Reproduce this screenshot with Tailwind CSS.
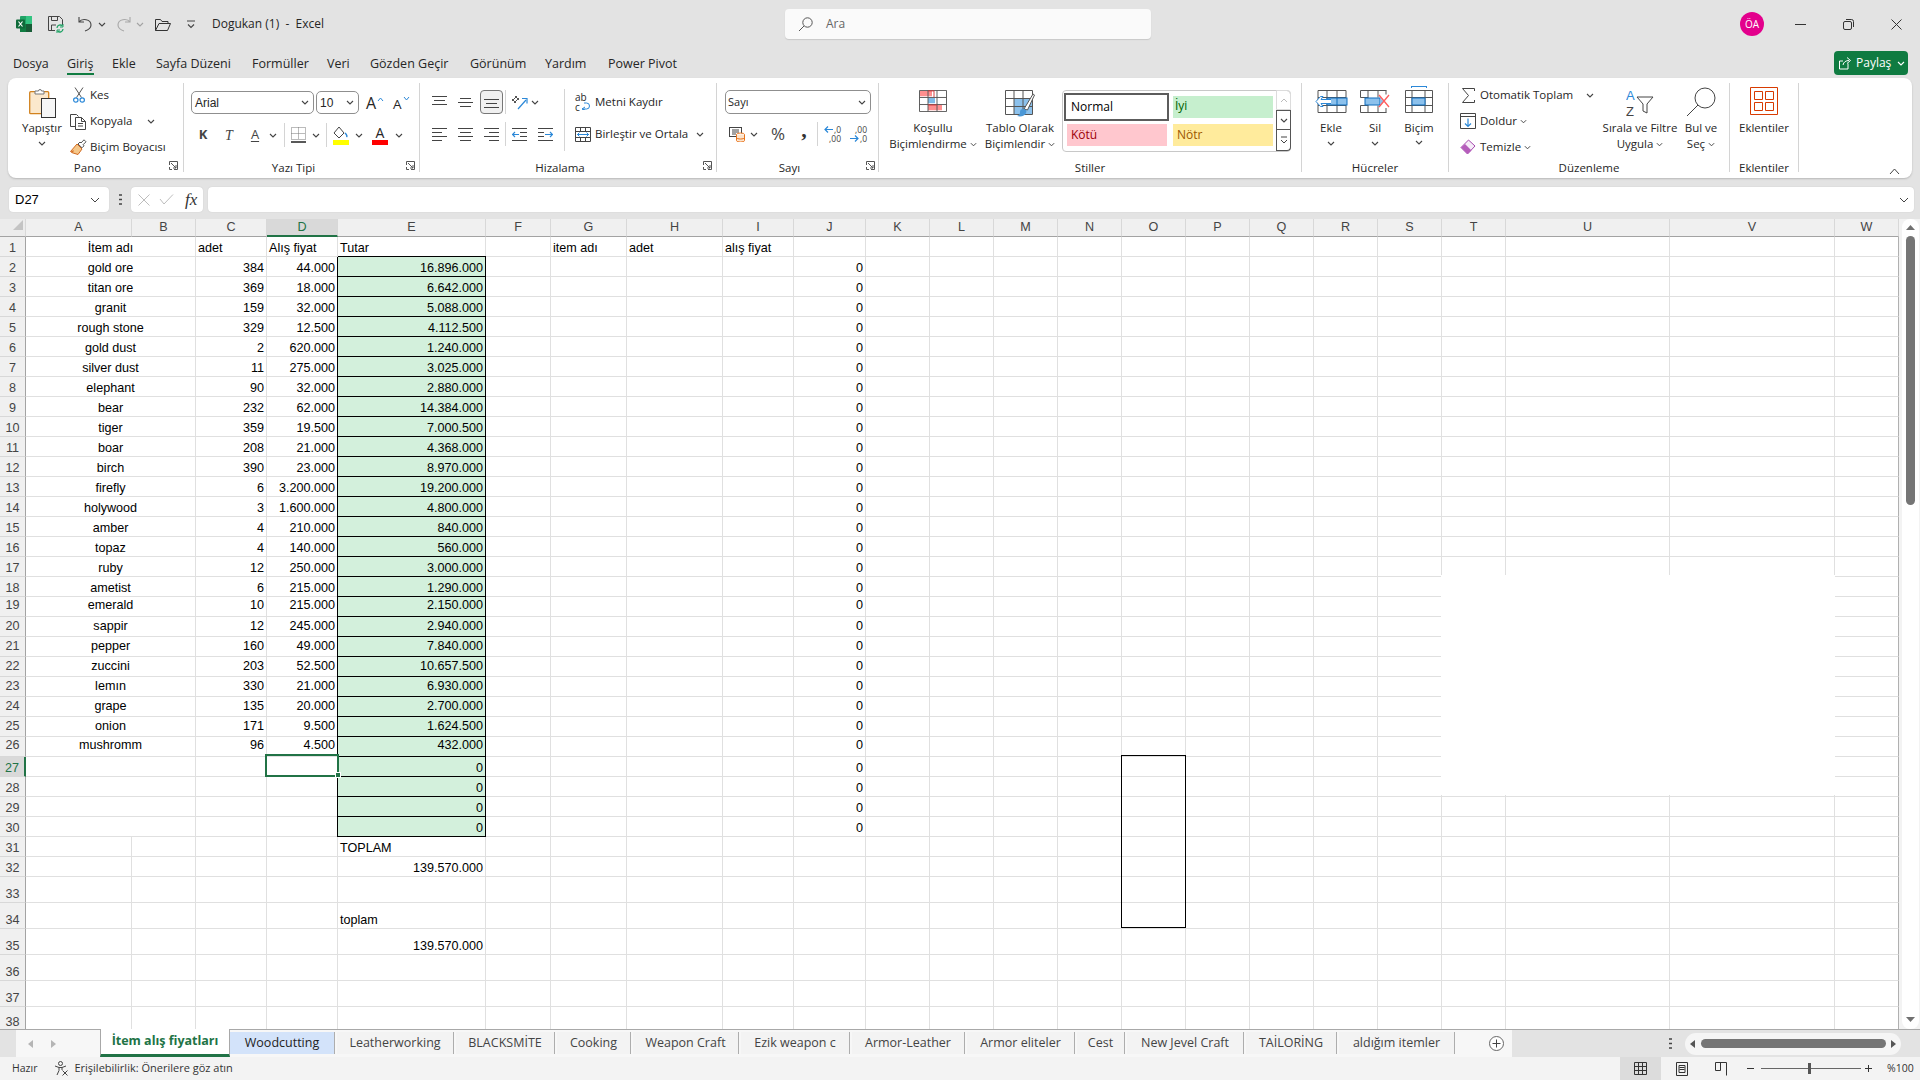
<!DOCTYPE html>
<html lang="tr">
<head>
<meta charset="utf-8">
<title>Dogukan (1) - Excel</title>
<script src="https://cdn.jsdelivr.net/npm/@tailwindcss/browser@4"></script>
</head>
<body class="w-[1920px] h-[1080px] overflow-hidden bg-[#e3e3e3] text-[#262626] flex flex-col font-['Open_Sans',sans-serif] text-[11.5px]">
<svg class="hidden"><symbol id="c" viewBox="0 0 8 5"><path d="M1 1l3 3 3-3" fill="none" stroke="#444" stroke-width="1.1"/></symbol></svg>

<!-- title bar -->
<div class="flex items-center h-[48px] shrink-0">
  <div class="flex items-center w-[785px] shrink-0">
    <svg class="ml-[16px]" width="16" height="16" viewBox="0 0 16 16"><rect x="4" width="12" height="16" rx="1" fill="#21a366"/><rect x="10" width="6" height="8" fill="#33c481"/><rect x="4" y="8" width="6" height="8" fill="#107c41"/><rect x="10" y="8" width="6" height="8" fill="#185c37"/><rect y="3.5" width="9" height="9" rx="1" fill="#0f6b3a"/><path d="M2.5 5.5l4 5M6.5 5.5l-4 5" stroke="#fff" stroke-width="1.2"/></svg>
    <svg class="ml-[16px]" width="16" height="17" viewBox="0 0 16 17"><path d="M.5.5h11l3 3V9M.5.5v14H7M3.5.5v4h6v-4M3.5 14V9H8" fill="none" stroke="#444"/><path d="M9 12a3.2 3.2 0 0 1 5.5-2M15 13a3.2 3.2 0 0 1-5.5 2" fill="none" stroke="#21a366" stroke-width="1.3"/><path d="M15 8v3h-3M9 17v-3h3" fill="none" stroke="#21a366"/></svg>
    <svg class="ml-[14px]" width="14" height="16" viewBox="0 0 14 16"><path d="M1 1v5h5M1 6c3-4 12-3 12 3 0 3-3 5-6 6" fill="none" stroke="#444" stroke-width="1.1"/></svg>
    <svg class="ml-[6px]" width="8" height="5"><use href="#c"/></svg>
    <svg class="ml-[11px]" width="14" height="16" viewBox="0 0 14 16"><path d="M13 1v5H8M13 6C10 2 1 3 1 9c0 3 3 5 6 6" fill="none" stroke="#a8a8a8" stroke-width="1.1"/></svg>
    <svg class="ml-[5px] opacity-40" width="8" height="5"><use href="#c"/></svg>
    <svg class="ml-[11px]" width="16" height="13" viewBox="0 0 16 13"><path d="M.5 12.5V1.5h5l1.5 2h6v2M.5 12.5h12l3-7H4l-3.5 7z" fill="none" stroke="#333"/></svg>
    <svg class="ml-[15px]" width="10" height="9" viewBox="0 0 10 9"><path d="M1 1h8M2 4.5l3 3 3-3" fill="none" stroke="#444" stroke-width="1.1"/></svg>
    <span class="ml-[16px] text-[12px] whitespace-pre">Dogukan (1)  -  Excel</span>
  </div>
  <div class="w-[366px] h-[30px] shrink-0 rounded-[4px] bg-[#fafafa] shadow-[0_1px_1px_#c8c8c8] flex items-center pl-[13px] text-[#666] text-[12px]">
    <svg width="15" height="15" viewBox="0 0 15 15"><circle cx="9.5" cy="5.5" r="4.7" fill="none" stroke="#555"/><path d="M6 9l-5 5" stroke="#555"/></svg>
    <span class="ml-[13px]">Ara</span>
  </div>
  <div class="flex-1 flex items-center justify-end">
    <div class="w-[24px] h-[24px] mr-[12px] rounded-full bg-[#e3008c] text-white text-[10px] flex items-center justify-center">ÖA</div>
    <div class="w-[48px] flex justify-center"><svg width="11" height="11"><path d="M0 5.5h11" stroke="#333"/></svg></div>
    <div class="w-[48px] flex justify-center"><svg width="11" height="11" viewBox="0 0 11 11"><rect x=".5" y="2.5" width="8" height="8" rx="1.5" fill="none" stroke="#333"/><path d="M3 .5h5.5a2 2 0 0 1 2 2V8" fill="none" stroke="#333"/></svg></div>
    <div class="w-[48px] flex justify-center"><svg width="11" height="11"><path d="M.5.5l10 10M10.5.5l-10 10" stroke="#333"/></svg></div>
  </div>
</div>

<!-- menu -->
<div class="flex items-center h-[30px] shrink-0 pl-[13px] text-[12.5px] [&>span]:pt-[2px]">
  <span class="w-[54px]">Dosya</span>
  <span class="w-[45px] relative font-medium">Giriş<span class="absolute left-0 top-[20px] w-[27px] h-[2px] bg-[#107c41]"></span></span>
  <span class="w-[44px]">Ekle</span>
  <span class="w-[96px]">Sayfa Düzeni</span>
  <span class="w-[75px]">Formüller</span>
  <span class="w-[43px]">Veri</span>
  <span class="w-[100px]">Gözden Geçir</span>
  <span class="w-[75px]">Görünüm</span>
  <span class="w-[63px]">Yardım</span>
  <span>Power Pivot</span>
  <div class="ml-auto mr-[12px] w-[74px] h-[24px] rounded-[4px] bg-[#0f7b41] text-white flex items-center pl-[5px] text-[12px]">
    <svg width="13" height="13" viewBox="0 0 13 13"><path d="M9 6.5v5.5H.5V4H4M4 8c.5-3 3-4.5 6-4.5M8 .5l3.5 3-3.5 3" fill="none" stroke="#fff"/></svg>
    <span class="ml-[4px]">Paylaş</span>
    <svg class="ml-[6px]" width="8" height="5" viewBox="0 0 8 5"><path d="M1 1l3 3 3-3" fill="none" stroke="#fff" stroke-width="1.1"/></svg>
  </div>
</div>

<!-- ribbon -->
<div class="mx-[8px] w-[1904px] h-[100px] shrink-0 rounded-[8px] bg-white shadow-[0_1px_2px_#b8b8b8] flex pt-[5px]">

  <!-- Pano -->
  <div class="w-[176px] h-[89px] border-r border-[#d4d4d4] flex flex-col">
    <div class="h-[75px] shrink-0 flex">
      <div class="ml-[6px] w-[56px] flex flex-col items-center pt-[5px]">
        <svg width="27" height="30" viewBox="0 0 27 30"><rect x=".7" y="3.7" width="19" height="22" rx="1" fill="#fbe8cc" stroke="#d2821e" stroke-width="1.3"/><path d="M6 6V3h3.5a1.5 1.5 0 0 1 3 0H15v3z" fill="#fff" stroke="#777"/><rect x="12.5" y="10.5" width="14" height="19" fill="#f6f6f6" stroke="#333"/></svg>
        <span class="mt-[2px] leading-[16px]">Yapıştır</span>
        <svg class="mt-[5px]" width="8" height="5"><use href="#c"/></svg>
      </div>
      <div class="flex flex-col -mt-[1px] [&>div]:shrink-0">
        <div class="h-[26px] flex items-center"><div class="w-[20px] flex justify-center pr-[3px]"><svg width="12" height="16" viewBox="0 0 12 16"><path d="M2 .5l6.5 10M10 .5L3.5 10.5" stroke="#555"/><circle cx="2.8" cy="13" r="2.2" fill="none" stroke="#2b88d8" stroke-width="1.2"/><circle cx="9.2" cy="13" r="2.2" fill="none" stroke="#2b88d8" stroke-width="1.2"/></svg></div><span>Kes</span></div>
        <div class="h-[26px] flex items-center"><div class="w-[20px] flex justify-start"><svg width="17" height="17" viewBox="0 0 17 17"><path d="M5 13.5H.5V1.5h6l2 2" fill="none" stroke="#444"/><path d="M5.5 4.5h6l4 4v8h-10zM11.5 4.5v4h4M8 10.5h5M8 13h5" fill="#fff" stroke="#444"/></svg></div><span>Kopyala</span><svg class="ml-[15px]" width="8" height="5"><use href="#c"/></svg></div>
        <div class="h-[26px] flex items-center"><div class="w-[20px]"><svg width="17" height="17" viewBox="0 0 17 17"><path d="M7 5l5 5-4 5.5-6.5-2 2-1.5-3 .5z" fill="#f5c78a" stroke="#d2691e"/><path d="M8 5l2-2 1 1 3-3.2 2 2-3 3 1 1-2 2z" fill="#fff" stroke="#555"/></svg></div><span>Biçim Boyacısı</span></div>
      </div>
    </div>
    <div class="h-[14px] leading-[14px] flex mt-[3px]"><span class="flex-1 text-center">Pano</span><span class="w-[16px] pl-[2px]"><svg width="9" height="9" viewBox="0 0 9 9"><path d="M.5 4V.5h8v8H5M2 2l5 5M7 4v3H4M.5 6v2.5H3" fill="none" stroke="#555"/></svg></span></div>
  </div>

  <!-- Yazı Tipi -->
  <div class="w-[236px] h-[89px] border-r border-[#d4d4d4] flex flex-col">
    <div class="h-[75px] shrink-0 pt-[8px] pl-[7px]">
      <div class="flex h-[23px] items-center">
        <div class="w-[123px] h-[23px] rounded-[5px] border border-[#8f8f8f] flex items-center justify-between pl-[3px] pr-[4px] font-['Liberation_Sans',sans-serif] text-[12px]">Arial<svg width="8" height="5"><use href="#c"/></svg></div>
        <div class="ml-[2px] w-[43px] h-[23px] rounded-[5px] border border-[#8f8f8f] flex items-center justify-between pl-[3px] pr-[4px] font-['Liberation_Sans',sans-serif] text-[12px]">10<svg width="8" height="5"><use href="#c"/></svg></div>
        <span class="ml-[7px] w-[27px] text-[16px] leading-[20px] flex items-start">A<svg class="mt-[4px] ml-[1px]" width="7" height="5" viewBox="0 0 7 5"><path d="M1 4l2.5-3L6 4" fill="none" stroke="#2b88d8"/></svg></span>
        <span class="w-[20px] text-[13.5px] leading-[20px] flex items-start pt-[2px]">A<svg class="mt-[2px] ml-[1px]" width="7" height="5" viewBox="0 0 7 5"><path d="M1 1l2.5 3L6 1" fill="none" stroke="#2b88d8"/></svg></span>
      </div>
      <div class="flex h-[24px] items-center mt-[9px]">
        <span class="w-[24px] text-center font-bold text-[13px] text-[#444]">K</span>
        <span class="ml-[2px] w-[24px] text-center italic text-[14px] text-[#444] font-['Liberation_Serif',serif]">T</span>
        <span class="ml-[2px] w-[24px] text-center text-[13px] underline underline-offset-2 text-[#444]">A</span>
        <svg class="ml-[2px]" width="8" height="5"><use href="#c"/></svg>
        <span class="ml-[7px] w-px h-[24px] bg-[#d4d4d4]"></span>
        <svg class="ml-[6px]" width="15" height="16" viewBox="0 0 15 16"><path d="M.5.5h14v12H.5zM7.5.5v12M.5 6.5h14" fill="none" stroke="#777" stroke-dasharray="1 1"/><path d="M0 15h15" stroke="#222" stroke-width="1.5"/></svg>
        <svg class="ml-[6px]" width="8" height="5"><use href="#c"/></svg>
        <span class="ml-[6px] w-px h-[24px] bg-[#d4d4d4]"></span>
        <svg class="ml-[6px]" width="16" height="19" viewBox="0 0 16 19"><path d="M6 1L1 7l5 5 5-5z" fill="#fff" stroke="#444"/><path d="M12 7c1.5 1.5 2.5 3 1.5 4" fill="none" stroke="#2b88d8" stroke-width="1.5"/><rect y="14" width="16" height="5" fill="#ffff00"/></svg>
        <svg class="ml-[6px]" width="8" height="5"><use href="#c"/></svg>
        <div class="ml-[9px] w-[16px] flex flex-col items-center"><span class="text-[14px] leading-[14px]">A</span><span class="w-[16px] h-[5px] bg-[#ff0000]"></span></div>
        <svg class="ml-[7px]" width="8" height="5"><use href="#c"/></svg>
      </div>
    </div>
    <div class="h-[14px] leading-[14px] flex mt-[3px]"><span class="flex-1 text-center">Yazı Tipi</span><span class="w-[16px] pl-[3px]"><svg width="9" height="9" viewBox="0 0 9 9"><path d="M.5 4V.5h8v8H5M2 2l5 5M7 4v3H4M.5 6v2.5H3" fill="none" stroke="#555"/></svg></span></div>
  </div>

  <!-- Hizalama -->
  <div class="w-[297px] h-[89px] border-r border-[#d4d4d4] flex flex-col">
    <div class="h-[75px] shrink-0 pt-[6px] flex">
      <div class="w-[145px] h-[62px] border-r border-[#d4d4d4] pl-[8px] pt-[1px]">
        <div class="flex h-[24px] items-center">
          <div class="w-[22px] flex justify-center"><svg width="15" height="12" viewBox="0 0 15 12"><path d="M0 .5h15M2 4.5h11M0 8.5h15" stroke="#444"/></svg></div>
          <div class="ml-[4px] w-[22px] flex justify-center"><svg width="15" height="12" viewBox="0 0 15 12"><path d="M2 2.5h11M0 6.5h15M2 10.5h11" stroke="#444"/></svg></div>
          <div class="ml-[4px] w-[23px] h-[24px] rounded-[4px] border border-[#777] bg-[#f0f0f0] flex justify-center items-center"><svg width="15" height="12" viewBox="0 0 15 12"><path d="M0 3.5h15M2 7.5h11M0 11.5h15" stroke="#444"/></svg></div>
          <span class="ml-[2px] w-px h-[24px] bg-[#d4d4d4]"></span>
          <svg class="ml-[5px]" width="17" height="15" viewBox="0 0 17 15"><path d="M1 6l5-5M3 8l5-5M4 1l4 4M1 4l4 4" stroke="#555" fill="none"/><path d="M7 14L15 5" stroke="#2b88d8" stroke-width="1.2"/><path d="M11 3.5h5v5" fill="none" stroke="#2b88d8" stroke-width="1.2"/></svg>
          <svg class="ml-[3px]" width="8" height="5"><use href="#c"/></svg>
        </div>
        <div class="flex h-[24px] items-center mt-[8px]">
          <div class="w-[22px] flex justify-center"><svg width="15" height="13" viewBox="0 0 15 13"><path d="M0 .5h15M0 4.5h10M0 8.5h15M0 12.5h10" stroke="#444"/></svg></div>
          <div class="ml-[4px] w-[22px] flex justify-center"><svg width="15" height="13" viewBox="0 0 15 13"><path d="M0 .5h15M2 4.5h11M0 8.5h15M2 12.5h11" stroke="#444"/></svg></div>
          <div class="ml-[4px] w-[23px] flex justify-center"><svg width="15" height="13" viewBox="0 0 15 13"><path d="M0 .5h15M5 4.5h10M0 8.5h15M5 12.5h10" stroke="#444"/></svg></div>
          <span class="ml-[2px] w-px h-[24px] bg-[#d4d4d4]"></span>
          <svg class="ml-[6px]" width="15" height="13" viewBox="0 0 15 13"><path d="M0 .5h15M8 4.5h7M8 8.5h7M0 12.5h15" stroke="#444"/><path d="M7 6.5H0M3 4L.5 6.5 3 9" fill="none" stroke="#2b88d8" stroke-width="1.2"/></svg>
          <svg class="ml-[11px]" width="15" height="13" viewBox="0 0 15 13"><path d="M0 .5h15M0 4.5h6M0 8.5h6M0 12.5h15" stroke="#444"/><path d="M7 6.5h8M12 4l2.5 2.5L12 9" fill="none" stroke="#2b88d8" stroke-width="1.2"/></svg>
        </div>
      </div>
      <div class="pl-[10px] pt-[1px]">
        <div class="flex h-[24px] items-center">
          <span class="w-[20px] relative h-[20px] shrink-0"><span class="text-[10px] leading-[10px] block">ab</span><span class="text-[10px] leading-[10px] block">c</span><svg class="absolute left-[6px] top-[9px]" width="9" height="9" viewBox="0 0 9 9"><path d="M1 8h4.5a2.5 2.5 0 0 0 0-6H3M4 6L1 8l3 1" fill="none" stroke="#2b88d8"/></svg></span>
          <span>Metni Kaydır</span>
        </div>
        <div class="flex h-[24px] items-center mt-[8px]">
          <svg width="16" height="15" viewBox="0 0 16 15"><path d="M.5.5h15v14H.5zM.5 4.5h15M.5 10.5h15M5.5.5v4M10.5.5v4M5.5 10.5v4M10.5 10.5v4" fill="none" stroke="#444"/><path d="M2 7.5h12M4.5 5.5l-2 2 2 2M11.5 5.5l2 2-2 2" fill="none" stroke="#2b88d8"/></svg>
          <span class="ml-[4px]">Birleştir ve Ortala</span>
          <svg class="ml-[8px]" width="8" height="5"><use href="#c"/></svg>
        </div>
      </div>
    </div>
    <div class="h-[14px] leading-[14px] flex mt-[3px]"><span class="flex-1 text-center">Hizalama</span><span class="w-[16px] pl-[3px]"><svg width="9" height="9" viewBox="0 0 9 9"><path d="M.5 4V.5h8v8H5M2 2l5 5M7 4v3H4M.5 6v2.5H3" fill="none" stroke="#555"/></svg></span></div>
  </div>

  <!-- Sayı -->
  <div class="w-[162px] h-[89px] border-r border-[#d4d4d4] flex flex-col">
    <div class="h-[75px] shrink-0 pt-[7px] pl-[8px]">
      <div class="w-[146px] h-[24px] rounded-[5px] border border-[#8f8f8f] flex items-center justify-between pl-[2px] pr-[4px] text-[11px]">Sayı<svg width="8" height="5"><use href="#c"/></svg></div>
      <div class="flex items-center h-[24px] mt-[8px]">
        <svg class="ml-[4px]" width="16" height="15" viewBox="0 0 16 15"><rect x=".5" y=".5" width="12" height="9" fill="#fff" stroke="#444"/><path d="M3 3h7M3 5h7M3 7h4" stroke="#444"/><ellipse cx="11.5" cy="7.5" rx="4" ry="1.5" fill="#fff" stroke="#e8731a"/><path d="M7.5 7.5v6c0 2 8 2 8 0v-6M7.5 10.5c0 2 8 2 8 0" fill="#fbe3cc" stroke="#e8731a"/></svg>
        <svg class="ml-[5px]" width="8" height="5"><use href="#c"/></svg>
        <span class="ml-[10px] w-[20px] text-center text-[17px] text-[#444]">%</span>
        <span class="ml-[8px] w-[16px] -mt-[9px] text-center text-[22px] leading-[16px] font-bold text-[#333] font-['Liberation_Serif',serif]">,</span>
        <span class="ml-[5px] w-px h-[24px] bg-[#d4d4d4]"></span>
        <div class="ml-[6px] w-[17px] relative h-[18px] text-[8.5px] leading-[9px] text-right text-[#444]">,0<br>,00<svg class="absolute left-0 top-[1px]" width="9" height="7" viewBox="0 0 9 7"><path d="M9 3.5H1M4 .5l-3 3 3 3" fill="none" stroke="#2b88d8" stroke-width="1.2"/></svg></div>
        <div class="ml-[9px] w-[17px] relative h-[18px] text-[8.5px] leading-[9px] text-right text-[#444]">,00<br>,0<svg class="absolute left-0 top-[10px]" width="9" height="7" viewBox="0 0 9 7"><path d="M0 3.5h8M5 .5l3 3-3 3" fill="none" stroke="#2b88d8" stroke-width="1.2"/></svg></div>
      </div>
    </div>
    <div class="h-[14px] leading-[14px] flex mt-[3px]"><span class="flex-1 text-center">Sayı</span><span class="w-[16px] pl-[4px]"><svg width="9" height="9" viewBox="0 0 9 9"><path d="M.5 4V.5h8v8H5M2 2l5 5M7 4v3H4M.5 6v2.5H3" fill="none" stroke="#555"/></svg></span></div>
  </div>

  <!-- Stiller -->
  <div class="w-[423px] h-[89px] border-r border-[#d4d4d4] flex flex-col">
    <div class="h-[75px] shrink-0 flex">
      <div class="ml-[10px] w-[88px] flex flex-col items-center pt-[4px]">
        <div class="h-[33px] pt-[3px]"><svg width="28" height="22" viewBox="0 0 28 25" preserveAspectRatio="none"><path d="M1 1h12v6H1zM9 17h14v6H9z" fill="#ff8f8f"/><path d="M9 9h7v6H9z" fill="#7fbce9"/><path d="M.5.5h27v24H.5zM.5 8.5h27M.5 16.5h27M9 .5v24M18 .5v24" fill="none" stroke="#555"/><path d="M9 1h6v7.5M9 17h9" fill="none" stroke="#d13438"/></svg></div>
        <span class="leading-[16px]">Koşullu</span>
        <span class="leading-[16px] flex items-center gap-[3px]">Biçimlendirme<svg width="7" height="5"><use href="#c"/></svg></span>
      </div>
      <div class="ml-[4px] w-[78px] flex flex-col items-center pt-[4px]">
        <div class="h-[33px] pt-[3px]"><svg width="30" height="28" viewBox="0 0 30 28"><path d="M9 9h18v15H9z" fill="#8cc1ec"/><path d="M.5.5h27v24H.5zM.5 8.5h27M.5 16.5h27M9 .5v24M18 .5v24" fill="none" stroke="#555"/><path d="M19 19L28 4l1.5 1-7 15z" fill="#fff" stroke="#555"/><path d="M18 19c3 0 4 2 3 4-1 3-5 4-9 3 3-1 3-3 3-4 0-2 1-3 3-3z" fill="#4a97d6"/></svg></div>
        <span class="leading-[16px]">Tablo Olarak</span>
        <span class="leading-[16px] flex items-center gap-[3px]">Biçimlendir<svg width="7" height="5"><use href="#c"/></svg></span>
      </div>
      <div class="ml-[3px] mt-[7px] w-[229px] h-[62px] rounded-[4px] border border-[#c8c8c8] flex text-[12px]">
        <div class="w-[213px] pt-[2px] pl-[1px]">
          <div class="flex items-center h-[28px]">
            <div class="w-[105px] h-[28px] border-2 border-[#5c5c5c] bg-white text-black pl-[5px] leading-[24px]">Normal</div>
            <div class="ml-[4px] w-[100px] h-[22px] bg-[#c6efce] text-[#006100] pl-[2px] leading-[20px]">İyi</div>
          </div>
          <div class="flex mt-[3px] h-[22px]">
            <div class="ml-[3px] w-[100px] bg-[#ffc7ce] text-[#9c0006] pl-[4px] leading-[22px]">Kötü</div>
            <div class="ml-[6px] w-[100px] bg-[#ffeb9c] text-[#9c5700] pl-[4px] leading-[22px]">Nötr</div>
          </div>
        </div>
        <div class="w-[15px] -mr-px -mt-px flex flex-col">
          <div class="h-[21px] border border-[#dcdcdc] rounded-tr-[4px] flex items-center justify-center"><svg width="8" height="5" viewBox="0 0 8 5"><path d="M1 4l3-3 3 3" fill="none" stroke="#bbb"/></svg></div>
          <div class="h-[21px] border border-[#555] flex items-center justify-center"><svg width="8" height="5"><use href="#c"/></svg></div>
          <div class="h-[22px] border border-[#555] border-t-0 rounded-br-[4px] flex items-center justify-center"><svg width="8" height="8" viewBox="0 0 8 8"><path d="M1 1h6M1 4l3 3 3-3" fill="none" stroke="#444"/></svg></div>
        </div>
      </div>
    </div>
    <div class="h-[14px] leading-[14px] flex mt-[3px]"><span class="flex-1 text-center">Stiller</span></div>
  </div>

  <!-- Hücreler -->
  <div class="w-[147px] h-[89px] border-r border-[#d4d4d4] flex flex-col">
    <div class="h-[75px] shrink-0 flex pl-[7px]">
      <div class="w-[44px] flex flex-col items-center pt-[4px]">
        <div class="h-[33px] pt-[3px]"><svg width="33" height="23" viewBox="0 0 33 23"><path d="M3 .5h28v22H3zM3 7.5h28M3 15.5h28M12 .5v22M22 .5v22" fill="none" stroke="#555"/><rect x="12" y="8" width="20" height="7" fill="#8cc1ec" stroke="#0f6cbd"/><path d="M22 8v7" stroke="#0f6cbd"/><path d="M16 9.5H6l2-3H5.5L1 11.5l4.500 5H8l-2-3h10" fill="#fff" stroke="#2b88d8"/></svg></div>
        <span class="leading-[16px]">Ekle</span>
        <svg class="mt-[5px]" width="8" height="5"><use href="#c"/></svg>
      </div>
      <div class="w-[44px] flex flex-col items-center pt-[4px]">
        <div class="h-[33px] pt-[3px]"><svg width="30" height="23" viewBox="0 0 30 23"><path d="M.5.5h26M.5 22.5h26M.5 7.5h8M.5 15.5h8M8 .5v7M8 15.5v7M18 .5v7M18 15.5v7M26 .5v4M26 18v4.5M.5.5v7M.5 15.5v7" fill="none" stroke="#555"/><rect x="5" y="8" width="15" height="7" fill="#8cc1ec" stroke="#0f6cbd"/><path d="M20 8l4 3.5-4 3.5" fill="#8cc1ec"/><path d="M19 5l10 12M29 5L19 17" stroke="#ff5c5c" stroke-width="1.3"/></svg></div>
        <span class="leading-[16px]">Sil</span>
        <svg class="mt-[5px]" width="8" height="5"><use href="#c"/></svg>
      </div>
      <div class="w-[44px] flex flex-col items-center">
        <div class="h-[37px] pt-[3px]"><svg width="28" height="27" viewBox="0 0 28 27"><path d="M6 .5h16M6.500 0v2M21.500 0v2" stroke="#2b88d8" fill="none"/><path d="M.5 4.5h27v22H.5zM.5 11.5h27M.5 19.5h27M7 4.5v22M20 4.5v22" fill="none" stroke="#555"/><rect x="7" y="12" width="13" height="7" fill="#8cc1ec" stroke="#0f6cbd"/></svg></div>
        <span class="leading-[16px]">Biçim</span>
        <svg class="mt-[4px]" width="8" height="5"><use href="#c"/></svg>
      </div>
    </div>
    <div class="h-[14px] leading-[14px] flex mt-[3px]"><span class="flex-1 text-center">Hücreler</span></div>
  </div>

  <!-- Düzenleme -->
  <div class="w-[281px] h-[89px] border-r border-[#d4d4d4] flex flex-col">
    <div class="h-[75px] shrink-0 flex pl-[11px]">
      <div class="w-[140px] flex flex-col -mt-[1px] [&>div]:shrink-0">
        <div class="h-[26px] flex items-center"><div class="w-[20px] flex justify-center pr-[4px]"><svg width="13" height="15" viewBox="0 0 13 15"><path d="M12.5 3V.5H.5l6 7-6 7h12V12" fill="none" stroke="#444"/></svg></div><span>Otomatik Toplam</span><svg class="ml-[13px]" width="8" height="5"><use href="#c"/></svg></div>
        <div class="h-[26px] flex items-center"><div class="w-[20px]"><svg width="16" height="16" viewBox="0 0 16 16"><path d="M.5.5h15v15H.5zM.5 3.5h15" fill="none" stroke="#444"/><path d="M8 5.5v8M5 10.5l3 3 3-3" fill="none" stroke="#2b88d8" stroke-width="1.2"/></svg></div><span>Doldur</span><svg class="ml-[3px]" width="7" height="5"><use href="#c"/></svg></div>
        <div class="h-[26px] flex items-center"><div class="w-[20px]"><svg width="16" height="16" viewBox="0 0 16 16"><path d="M1 8.5L8.500 1 15 7l-7.500 8z" fill="#f6ecf8" stroke="#a648ad"/><path d="M1 8.5L5 5l6.500 6.500L7.500 15z" fill="#b55dbb"/></svg></div><span>Temizle</span><svg class="ml-[3px]" width="7" height="5"><use href="#c"/></svg></div>
      </div>
      <div class="w-[80px] flex flex-col items-center pt-[4px]">
        <div class="h-[33px] pt-px"><svg width="28" height="29" viewBox="0 0 28 29"><text x="0" y="12" font-size="13" fill="#2b88d8" font-family="Liberation Sans, sans-serif">A</text><text x="0" y="28" font-size="13" fill="#444" font-family="Liberation Sans, sans-serif">Z</text><path d="M11 9h16l-6 7v9l-4-2v-7z" fill="none" stroke="#444"/></svg></div>
        <span class="leading-[16px] whitespace-nowrap">Sırala ve Filtre</span>
        <span class="leading-[16px] flex items-center gap-[3px]">Uygula<svg width="7" height="5"><use href="#c"/></svg></span>
      </div>
      <div class="w-[42px] flex flex-col items-center pt-[4px]">
        <div class="h-[33px]"><svg width="30" height="30" viewBox="0 0 30 30"><circle cx="19" cy="11" r="10" fill="#fff" stroke="#444"/><path d="M12 18L1 29" stroke="#444"/></svg></div>
        <span class="leading-[16px]">Bul ve</span>
        <span class="leading-[16px] flex items-center gap-[3px]">Seç<svg width="7" height="5"><use href="#c"/></svg></span>
      </div>
    </div>
    <div class="h-[14px] leading-[14px] flex mt-[3px]"><span class="flex-1 text-center">Düzenleme</span></div>
  </div>

  <!-- Eklentiler -->
  <div class="w-[69px] h-[89px] border-r border-[#d4d4d4] flex flex-col">
    <div class="h-[75px] shrink-0 flex flex-col items-center pt-[4px]">
      <div class="h-[33px]"><svg width="28" height="28" viewBox="0 0 28 28"><path d="M.5.5h27v27H.5z" fill="none" stroke="#d83b01"/><path d="M4.500 4.500h8v8h-8zM15.500 4.500h8v8h-8zM4.500 15.500h8v8h-8zM15.500 15.500h8v8h-8z" fill="#fff" stroke="#d83b01"/></svg></div>
      <span class="leading-[16px]">Eklentiler</span>
    </div>
    <div class="h-[14px] leading-[14px] flex mt-[3px]"><span class="flex-1 text-center">Eklentiler</span></div>
  </div>
  <div class="flex-1 h-[89px] flex items-end justify-end pr-[12px]"><svg class="mb-[-3px]" width="11" height="7" viewBox="0 0 11 7"><path d="M1 6l4.5-5L10 6" fill="none" stroke="#444"/></svg></div>
</div>

<!-- formula bar -->
<div class="flex h-[25px] mt-[9px] mb-[7px] shrink-0 pl-[9px] pr-[6px] font-['Liberation_Sans',sans-serif] text-[13px]">
  <div class="w-[100px] rounded-[4px] bg-white shadow-[0_0_1px_#bbb] flex items-center justify-between pl-[6px] pr-[9px] text-black">D27<svg width="10" height="6" viewBox="0 0 10 6"><path d="M1 1l4 4 4-4" fill="none" stroke="#444"/></svg></div>
  <div class="w-[22px] flex items-center justify-center"><svg width="3" height="11"><path d="M0 1h3M0 5.5h3M0 10h3" stroke="#444" stroke-width="1.5"/></svg></div>
  <div class="w-[72px] rounded-[4px] bg-white shadow-[0_0_1px_#bbb] flex items-center pl-[7px]">
    <svg width="12" height="12"><path d="M.5.5l11 11M11.5.5l-11 11" stroke="#bdbdbd"/></svg>
    <svg class="ml-[9px]" width="15" height="11" viewBox="0 0 15 11"><path d="M1 5l4 5L14 .5" fill="none" stroke="#bdbdbd"/></svg>
    <span class="ml-[11px] italic text-[17px] leading-[17px] font-['Liberation_Serif',serif] text-[#333]">fx</span>
  </div>
  <div class="ml-[5px] flex-1 rounded-[4px] bg-white shadow-[0_0_1px_#bbb] flex items-center justify-end pr-[5px]"><svg width="10" height="6" viewBox="0 0 10 6"><path d="M1 1l4 4 4-4" fill="none" stroke="#444"/></svg></div>
</div>

<!-- sheet -->
<div class="flex h-[810px] shrink-0">
  <div class="relative w-[1899px] h-[810px] overflow-hidden bg-white font-['Liberation_Sans',sans-serif] text-[12.6px] text-black">
    <table class="table-fixed w-[1899px] border-separate border-spacing-0 whitespace-nowrap [&_td]:align-top [&_td]:leading-[14px] [&_td]:px-[2px] [&_td]:border-r [&_td]:border-b [&_td]:border-[#e0e0e0] [&_th]:font-normal [&_th]:text-[#444] [&_th]:bg-[#f0f0f0] [&_th]:align-top [&_th]:leading-[14px] [&_thead_th]:leading-[15px] [&_thead_th]:pt-px [&_thead_th]:border-r [&_thead_th]:border-r-[#d8d8d8] [&_thead_th]:border-b [&_thead_th]:border-b-[#a3a3a3] [&_tbody_th]:border-r [&_tbody_th]:border-r-[#a3a3a3] [&_tbody_th]:border-b [&_tbody_th]:border-b-[#d8d8d8] [&_tr>td:last-child]:border-r-[#b0b0b0]">
      <colgroup>
        <col class="w-[26px]"><col class="w-[106px]"><col class="w-[64px]"><col class="w-[71px]"><col class="w-[71px]"><col class="w-[148px]"><col class="w-[65px]"><col class="w-[76px]"><col class="w-[96px]"><col class="w-[71px]"><col class="w-[72px]"><col class="w-[64px]"><col class="w-[64px]"><col class="w-[64px]"><col class="w-[64px]"><col class="w-[64px]"><col class="w-[64px]"><col class="w-[64px]"><col class="w-[64px]"><col class="w-[64px]"><col class="w-[64px]"><col class="w-[164px]"><col class="w-[165px]"><col class="w-[64px]">
      </colgroup>
      <thead>
        <tr class="h-[17px]"><th class="bg-[#ececec]!"><svg class="ml-[13px]" width="10" height="10"><path d="M10 0v10H0z" fill="#c4c4c4"/></svg></th><th>A</th><th>B</th><th>C</th><th class="bg-[#d9d9d9]! text-[#217346]! border-b-2! border-b-[#217346]!">D</th><th>E</th><th>F</th><th>G</th><th>H</th><th>I</th><th>J</th><th>K</th><th>L</th><th>M</th><th>N</th><th>O</th><th>P</th><th>Q</th><th>R</th><th>S</th><th>T</th><th>U</th><th>V</th><th>W</th></tr>
      </thead>
      <tbody class="[&>tr>td:nth-child(2)]:text-center">
        <tr class="h-[20px] [&>*]:pt-[4px]"><th>1</th><td colspan="2">İtem adı</td><td>adet</td><td>Alış fiyat</td><td>Tutar</td><td></td><td>item adı</td><td>adet</td><td>alış fiyat</td><td></td><td></td><td></td><td></td><td></td><td></td><td></td><td></td><td></td><td></td><td></td><td></td><td></td><td></td></tr>
      </tbody>
      <tbody class="[&>tr>td:nth-child(2)]:text-center [&>tr>td:nth-last-child(21)]:text-right [&>tr>td:nth-last-child(20)]:text-right [&>tr>td:nth-last-child(19)]:text-right [&>tr>td:nth-last-child(14)]:text-right [&>tr>td:nth-last-child(19)]:bg-[#d3f0dc] [&>tr>td:nth-last-child(19)]:border-r-black [&>tr>td:nth-last-child(19)]:border-b-black [&>tr>td:nth-last-child(19)]:shadow-[-1px_0_0_#000,0_-1px_0_#000]">
        <tr class="h-[20px] [&>*]:pt-[4px]"><th>2</th><td colspan="2">gold ore</td><td>384</td><td>44.000</td><td>16.896.000</td><td></td><td></td><td></td><td></td><td>0</td><td></td><td></td><td></td><td></td><td></td><td></td><td></td><td></td><td></td><td></td><td></td><td></td><td></td></tr>
        <tr class="h-[20px] [&>*]:pt-[4px]"><th>3</th><td colspan="2">titan ore</td><td>369</td><td>18.000</td><td>6.642.000</td><td></td><td></td><td></td><td></td><td>0</td><td></td><td></td><td></td><td></td><td></td><td></td><td></td><td></td><td></td><td></td><td></td><td></td><td></td></tr>
        <tr class="h-[20px] [&>*]:pt-[4px]"><th>4</th><td colspan="2">granit</td><td>159</td><td>32.000</td><td>5.088.000</td><td></td><td></td><td></td><td></td><td>0</td><td></td><td></td><td></td><td></td><td></td><td></td><td></td><td></td><td></td><td></td><td></td><td></td><td></td></tr>
        <tr class="h-[20px] [&>*]:pt-[4px]"><th>5</th><td colspan="2">rough stone</td><td>329</td><td>12.500</td><td>4.112.500</td><td></td><td></td><td></td><td></td><td>0</td><td></td><td></td><td></td><td></td><td></td><td></td><td></td><td></td><td></td><td></td><td></td><td></td><td></td></tr>
        <tr class="h-[20px] [&>*]:pt-[4px]"><th>6</th><td colspan="2">gold dust</td><td>2</td><td>620.000</td><td>1.240.000</td><td></td><td></td><td></td><td></td><td>0</td><td></td><td></td><td></td><td></td><td></td><td></td><td></td><td></td><td></td><td></td><td></td><td></td><td></td></tr>
        <tr class="h-[20px] [&>*]:pt-[4px]"><th>7</th><td colspan="2">silver dust</td><td>11</td><td>275.000</td><td>3.025.000</td><td></td><td></td><td></td><td></td><td>0</td><td></td><td></td><td></td><td></td><td></td><td></td><td></td><td></td><td></td><td></td><td></td><td></td><td></td></tr>
        <tr class="h-[20px] [&>*]:pt-[4px]"><th>8</th><td colspan="2">elephant</td><td>90</td><td>32.000</td><td>2.880.000</td><td></td><td></td><td></td><td></td><td>0</td><td></td><td></td><td></td><td></td><td></td><td></td><td></td><td></td><td></td><td></td><td></td><td></td><td></td></tr>
        <tr class="h-[20px] [&>*]:pt-[4px]"><th>9</th><td colspan="2">bear</td><td>232</td><td>62.000</td><td>14.384.000</td><td></td><td></td><td></td><td></td><td>0</td><td></td><td></td><td></td><td></td><td></td><td></td><td></td><td></td><td></td><td></td><td></td><td></td><td></td></tr>
        <tr class="h-[20px] [&>*]:pt-[4px]"><th>10</th><td colspan="2">tiger</td><td>359</td><td>19.500</td><td>7.000.500</td><td></td><td></td><td></td><td></td><td>0</td><td></td><td></td><td></td><td></td><td></td><td></td><td></td><td></td><td></td><td></td><td></td><td></td><td></td></tr>
        <tr class="h-[20px] [&>*]:pt-[4px]"><th>11</th><td colspan="2">boar</td><td>208</td><td>21.000</td><td>4.368.000</td><td></td><td></td><td></td><td></td><td>0</td><td></td><td></td><td></td><td></td><td></td><td></td><td></td><td></td><td></td><td></td><td></td><td></td><td></td></tr>
        <tr class="h-[20px] [&>*]:pt-[4px]"><th>12</th><td colspan="2">birch</td><td>390</td><td>23.000</td><td>8.970.000</td><td></td><td></td><td></td><td></td><td>0</td><td></td><td></td><td></td><td></td><td></td><td></td><td></td><td></td><td></td><td></td><td></td><td></td><td></td></tr>
        <tr class="h-[20px] [&>*]:pt-[4px]"><th>13</th><td colspan="2">firefly</td><td>6</td><td>3.200.000</td><td>19.200.000</td><td></td><td></td><td></td><td></td><td>0</td><td></td><td></td><td></td><td></td><td></td><td></td><td></td><td></td><td></td><td></td><td></td><td></td><td></td></tr>
        <tr class="h-[20px] [&>*]:pt-[4px]"><th>14</th><td colspan="2">holywood</td><td>3</td><td>1.600.000</td><td>4.800.000</td><td></td><td></td><td></td><td></td><td>0</td><td></td><td></td><td></td><td></td><td></td><td></td><td></td><td></td><td></td><td></td><td></td><td></td><td></td></tr>
        <tr class="h-[20px] [&>*]:pt-[4px]"><th>15</th><td colspan="2">amber</td><td>4</td><td>210.000</td><td>840.000</td><td></td><td></td><td></td><td></td><td>0</td><td></td><td></td><td></td><td></td><td></td><td></td><td></td><td></td><td></td><td></td><td></td><td></td><td></td></tr>
        <tr class="h-[20px] [&>*]:pt-[4px]"><th>16</th><td colspan="2">topaz</td><td>4</td><td>140.000</td><td>560.000</td><td></td><td></td><td></td><td></td><td>0</td><td></td><td></td><td></td><td></td><td></td><td></td><td></td><td></td><td></td><td></td><td></td><td></td><td></td></tr>
        <tr class="h-[20px] [&>*]:pt-[4px]"><th>17</th><td colspan="2">ruby</td><td>12</td><td>250.000</td><td>3.000.000</td><td></td><td></td><td></td><td></td><td>0</td><td></td><td></td><td></td><td></td><td></td><td></td><td></td><td></td><td></td><td></td><td></td><td></td><td></td></tr>
        <tr class="h-[20px] [&>*]:pt-[4px]"><th>18</th><td colspan="2">ametist</td><td>6</td><td>215.000</td><td>1.290.000</td><td></td><td></td><td></td><td></td><td>0</td><td></td><td></td><td></td><td></td><td></td><td></td><td></td><td></td><td></td><td></td><td></td><td></td><td></td></tr>
        <tr class="h-[20px] [&>*]:pt-[1px]"><th>19</th><td colspan="2">emerald</td><td>10</td><td>215.000</td><td>2.150.000</td><td></td><td></td><td></td><td></td><td>0</td><td></td><td></td><td></td><td></td><td></td><td></td><td></td><td></td><td></td><td></td><td></td><td></td><td></td></tr>
        <tr class="h-[20px] [&>*]:pt-[2px]"><th>20</th><td colspan="2">sappir</td><td>12</td><td>245.000</td><td>2.940.000</td><td></td><td></td><td></td><td></td><td>0</td><td></td><td></td><td></td><td></td><td></td><td></td><td></td><td></td><td></td><td></td><td></td><td></td><td></td></tr>
        <tr class="h-[20px] [&>*]:pt-[2px]"><th>21</th><td colspan="2">pepper</td><td>160</td><td>49.000</td><td>7.840.000</td><td></td><td></td><td></td><td></td><td>0</td><td></td><td></td><td></td><td></td><td></td><td></td><td></td><td></td><td></td><td></td><td></td><td></td><td></td></tr>
        <tr class="h-[20px] [&>*]:pt-[2px]"><th>22</th><td colspan="2">zuccini</td><td>203</td><td>52.500</td><td>10.657.500</td><td></td><td></td><td></td><td></td><td>0</td><td></td><td></td><td></td><td></td><td></td><td></td><td></td><td></td><td></td><td></td><td></td><td></td><td></td></tr>
        <tr class="h-[20px] [&>*]:pt-[2px]"><th>23</th><td colspan="2">lemın</td><td>330</td><td>21.000</td><td>6.930.000</td><td></td><td></td><td></td><td></td><td>0</td><td></td><td></td><td></td><td></td><td></td><td></td><td></td><td></td><td></td><td></td><td></td><td></td><td></td></tr>
        <tr class="h-[20px] [&>*]:pt-[2px]"><th>24</th><td colspan="2">grape</td><td>135</td><td>20.000</td><td>2.700.000</td><td></td><td></td><td></td><td></td><td>0</td><td></td><td></td><td></td><td></td><td></td><td></td><td></td><td></td><td></td><td></td><td></td><td></td><td></td></tr>
        <tr class="h-[20px] [&>*]:pt-[2px]"><th>25</th><td colspan="2">onion</td><td>171</td><td>9.500</td><td>1.624.500</td><td></td><td></td><td></td><td></td><td>0</td><td></td><td></td><td></td><td></td><td></td><td></td><td></td><td></td><td></td><td></td><td></td><td></td><td></td></tr>
        <tr class="h-[20px] [&>*]:pt-[1px]"><th>26</th><td colspan="2">mushromm</td><td>96</td><td>4.500</td><td>432.000</td><td></td><td></td><td></td><td></td><td>0</td><td></td><td></td><td></td><td></td><td></td><td></td><td></td><td></td><td></td><td></td><td></td><td></td><td></td></tr>
        <tr class="h-[20px] [&>*]:pt-[4px]"><th class="bg-[#d9d9d9]! text-[#217346]! border-r-2! border-r-[#217346]!">27</th><td colspan="2"></td><td></td><td></td><td>0</td><td></td><td></td><td></td><td></td><td>0</td><td></td><td></td><td></td><td></td><td></td><td></td><td></td><td></td><td></td><td></td><td></td><td></td><td></td></tr>
        <tr class="h-[20px] [&>*]:pt-[4px]"><th>28</th><td colspan="2"></td><td></td><td></td><td>0</td><td></td><td></td><td></td><td></td><td>0</td><td></td><td></td><td></td><td></td><td></td><td></td><td></td><td></td><td></td><td></td><td></td><td></td><td></td></tr>
        <tr class="h-[20px] [&>*]:pt-[4px]"><th>29</th><td colspan="2"></td><td></td><td></td><td>0</td><td></td><td></td><td></td><td></td><td>0</td><td></td><td></td><td></td><td></td><td></td><td></td><td></td><td></td><td></td><td></td><td></td><td></td><td></td></tr>
        <tr class="h-[20px] [&>*]:pt-[4px]"><th>30</th><td colspan="2"></td><td></td><td></td><td>0</td><td></td><td></td><td></td><td></td><td>0</td><td></td><td></td><td></td><td></td><td></td><td></td><td></td><td></td><td></td><td></td><td></td><td></td><td></td></tr>
      </tbody>
      <tbody>
        <tr class="h-[20px] [&>*]:pt-[4px]"><th>31</th><td></td><td></td><td></td><td></td><td>TOPLAM</td><td></td><td></td><td></td><td></td><td></td><td></td><td></td><td></td><td></td><td></td><td></td><td></td><td></td><td></td><td></td><td></td><td></td><td></td></tr>
        <tr class="h-[20px] [&>*]:pt-[4px]"><th>32</th><td></td><td></td><td></td><td></td><td class="text-right">139.570.000</td><td></td><td></td><td></td><td></td><td></td><td></td><td></td><td></td><td></td><td></td><td></td><td></td><td></td><td></td><td></td><td></td><td></td><td></td></tr>
        <tr class="h-[26px] [&>*]:pt-[10px]"><th>33</th><td></td><td></td><td></td><td></td><td></td><td></td><td></td><td></td><td></td><td></td><td></td><td></td><td></td><td></td><td></td><td></td><td></td><td></td><td></td><td></td><td></td><td></td><td></td></tr>
        <tr class="h-[26px] [&>*]:pt-[10px]"><th>34</th><td></td><td></td><td></td><td></td><td>toplam</td><td></td><td></td><td></td><td></td><td></td><td></td><td></td><td></td><td></td><td></td><td></td><td></td><td></td><td></td><td></td><td></td><td></td><td></td></tr>
        <tr class="h-[26px] [&>*]:pt-[10px]"><th>35</th><td></td><td></td><td></td><td></td><td class="text-right">139.570.000</td><td></td><td></td><td></td><td></td><td></td><td></td><td></td><td></td><td></td><td></td><td></td><td></td><td></td><td></td><td></td><td></td><td></td><td></td></tr>
        <tr class="h-[26px] [&>*]:pt-[10px]"><th>36</th><td></td><td></td><td></td><td></td><td></td><td></td><td></td><td></td><td></td><td></td><td></td><td></td><td></td><td></td><td></td><td></td><td></td><td></td><td></td><td></td><td></td><td></td><td></td></tr>
        <tr class="h-[26px] [&>*]:pt-[10px]"><th>37</th><td></td><td></td><td></td><td></td><td></td><td></td><td></td><td></td><td></td><td></td><td></td><td></td><td></td><td></td><td></td><td></td><td></td><td></td><td></td><td></td><td></td><td></td><td></td></tr>
        <tr class="h-[26px] [&>*]:pt-[8px]"><th>38</th><td></td><td></td><td></td><td></td><td></td><td></td><td></td><td></td><td></td><td></td><td></td><td></td><td></td><td></td><td></td><td></td><td></td><td></td><td></td><td></td><td></td><td></td><td></td></tr>
      </tbody>
    </table>
    <!-- overlays -->
    <div class="absolute left-[1441px] top-[356px] w-[394px] h-[220px] bg-white"></div>
    <div class="absolute left-[1121px] top-[536px] w-[65px] h-[173px] border border-black"></div>
    <div class="absolute left-[265px] top-[535px] w-[74px] h-[23px] border-2 border-[#217346]"></div>
    <div class="absolute left-[335px] top-[553px] w-[6px] h-[6px] bg-[#217346] border border-white"></div>
  </div>
  <div class="w-[21px] h-[810px] bg-[#f3f3f3] pl-[3px] pr-px">
    <div class="h-[810px] rounded-[8px] bg-white flex flex-col items-center pt-[6px]">
      <svg width="9" height="5"><path d="M4.5 0L9 5H0z" fill="#707070"/></svg>
      <div class="mt-[6px] w-[9px] h-[269px] rounded-full bg-[#757575]"></div>
      <svg class="mt-[512px]" width="9" height="5"><path d="M0 0h9L4.5 5z" fill="#707070"/></svg>
    </div>
  </div>
</div>

<!-- sheet tabs -->
<div class="flex h-[28px] shrink-0 border-t border-[#a8a8a8] text-[12.5px] text-[#444]">
  <div class="w-[16px] bg-[#e3e3e3]"></div>
  <div class="w-[84px] bg-[#f7f7f7] flex items-center pl-[12px] gap-[18px]"><svg width="5" height="8"><path d="M5 0v8L0 4z" fill="#b5b5b5"/></svg><svg width="5" height="8"><path d="M0 0v8l5-4z" fill="#b5b5b5"/></svg></div>
  <div class="flex bg-[#f7f7f7]">
    <div class="w-[130px] bg-white border-x border-[#a8a8a8] border-b-[3px] border-b-[#217346] -mt-px flex items-center justify-center font-bold text-[#217346]">İtem alış fiyatları</div>
    <div class="w-[105px] h-[22px] bg-[#d3e3fa] text-[#222] mr-[2px] flex items-center justify-center border-r border-[#adadad] mt-[2px]">Woodcutting</div>
    <div class="w-[117px] h-[22px] bg-[#f3f3f3] mr-[2px] flex items-center justify-center border-r border-[#adadad] mt-[2px]">Leatherworking</div>
    <div class="w-[99px] h-[22px] bg-[#f3f3f3] mr-[2px] flex items-center justify-center border-r border-[#adadad] mt-[2px]">BLACKSMİTE</div>
    <div class="w-[74px] h-[22px] bg-[#f3f3f3] mr-[2px] flex items-center justify-center border-r border-[#adadad] mt-[2px]">Cooking</div>
    <div class="w-[106px] h-[22px] bg-[#f3f3f3] mr-[2px] flex items-center justify-center border-r border-[#adadad] mt-[2px]">Weapon Craft</div>
    <div class="w-[109px] h-[22px] bg-[#f3f3f3] mr-[2px] flex items-center justify-center border-r border-[#adadad] mt-[2px]">Ezik weapon c</div>
    <div class="w-[113px] h-[22px] bg-[#f3f3f3] mr-[2px] flex items-center justify-center border-r border-[#adadad] mt-[2px]">Armor-Leather</div>
    <div class="w-[108px] h-[22px] bg-[#f3f3f3] mr-[2px] flex items-center justify-center border-r border-[#adadad] mt-[2px]">Armor eliteler</div>
    <div class="w-[48px] h-[22px] bg-[#f3f3f3] mr-[2px] flex items-center justify-center border-r border-[#adadad] mt-[2px]">Cest</div>
    <div class="w-[117px] h-[22px] bg-[#f3f3f3] mr-[2px] flex items-center justify-center border-r border-[#adadad] mt-[2px]">New Jevel Craft</div>
    <div class="w-[91px] h-[22px] bg-[#f3f3f3] mr-[2px] flex items-center justify-center border-r border-[#adadad] mt-[2px]">TAİLORİNG</div>
    <div class="w-[116px] h-[22px] bg-[#f3f3f3] flex items-center justify-center border-r border-[#adadad] mt-[2px]">aldığım itemler</div>
    <div class="w-[57px] flex items-center justify-end pr-[8px]"><svg width="15" height="15" viewBox="0 0 15 15"><circle cx="7.5" cy="7.5" r="7" fill="#fff" stroke="#666"/><path d="M7.5 3.5v8M3.5 7.5h8" stroke="#444"/></svg></div>
  </div>
  <div class="flex-1 flex items-center">
    <svg class="ml-[157px]" width="3" height="11"><path d="M0 1h3M0 5.5h3M0 10h3" stroke="#444" stroke-width="1.5"/></svg>
    <div class="ml-[13px] w-[216px] h-[22px] rounded-full bg-[#f5f5f5] flex items-center justify-between px-[5px]">
      <svg width="5" height="8"><path d="M5 0v8L0 4z" fill="#555"/></svg>
      <div class="w-[185px] h-[9px] rounded-full bg-[#757575]"></div>
      <svg width="5" height="8"><path d="M0 0v8l5-4z" fill="#555"/></svg>
    </div>
  </div>
</div>

<!-- status bar -->
<div class="flex items-center h-[23px] shrink-0 bg-[#f3f3f3] text-[11px] text-[#333]">
  <span class="ml-[12px] text-[10.5px]">Hazır</span>
  <svg class="ml-[17px]" width="15" height="15" viewBox="0 0 15 15"><circle cx="6.5" cy="2.5" r="2" fill="none" stroke="#444"/><path d="M1 5l4 1.5h3L12 5M5 6.5v3L3 14M8 6.5V9" fill="none" stroke="#444"/><path d="M8.500 9.500l5 5M13.500 9.500l-5 5" stroke="#444"/></svg>
  <span class="ml-[5px]">Erişilebilirlik: Önerilere göz atın</span>
  <div class="ml-auto flex items-center h-[23px]">
    <div class="w-[41px] h-[23px] bg-[#dcdcdc] flex items-center justify-center"><svg width="13" height="13" viewBox="0 0 13 13"><path d="M.5.5h12v12H.5zM.5 4.5h12M.5 8.5h12M4.5.5v12M8.5.5v12" fill="none" stroke="#333"/></svg></div>
    <div class="w-[41px] flex justify-center"><svg width="12" height="14" viewBox="0 0 12 14"><path d="M.5.5h11v13H.5zM3 3.500h6v7H3z" fill="none" stroke="#333"/><path d="M3.500 5.500h5M3.500 7.500h5" stroke="#333"/></svg></div>
    <div class="w-[37px] flex justify-center"><svg width="12" height="14" viewBox="0 0 12 14"><path d="M.5.5h11v13M.5.5v8h5v-8" fill="none" stroke="#333"/></svg></div>
    <svg class="ml-[8px]" width="7" height="1"><path d="M0 .5h7" stroke="#333"/></svg>
    <div class="ml-[7px] w-[100px] h-[11px] relative flex items-center"><span class="w-full h-px bg-[#666]"></span><span class="absolute left-[47px] w-[3px] h-[11px] bg-[#555]"></span></div>
    <svg class="ml-[4px]" width="7" height="7"><path d="M0 3.5h7M3.5 0v7" stroke="#333"/></svg>
    <span class="ml-[15px] mr-[6px] w-[27px] whitespace-nowrap text-[10.5px]">%100</span>
  </div>
</div>
</body>
</html>
